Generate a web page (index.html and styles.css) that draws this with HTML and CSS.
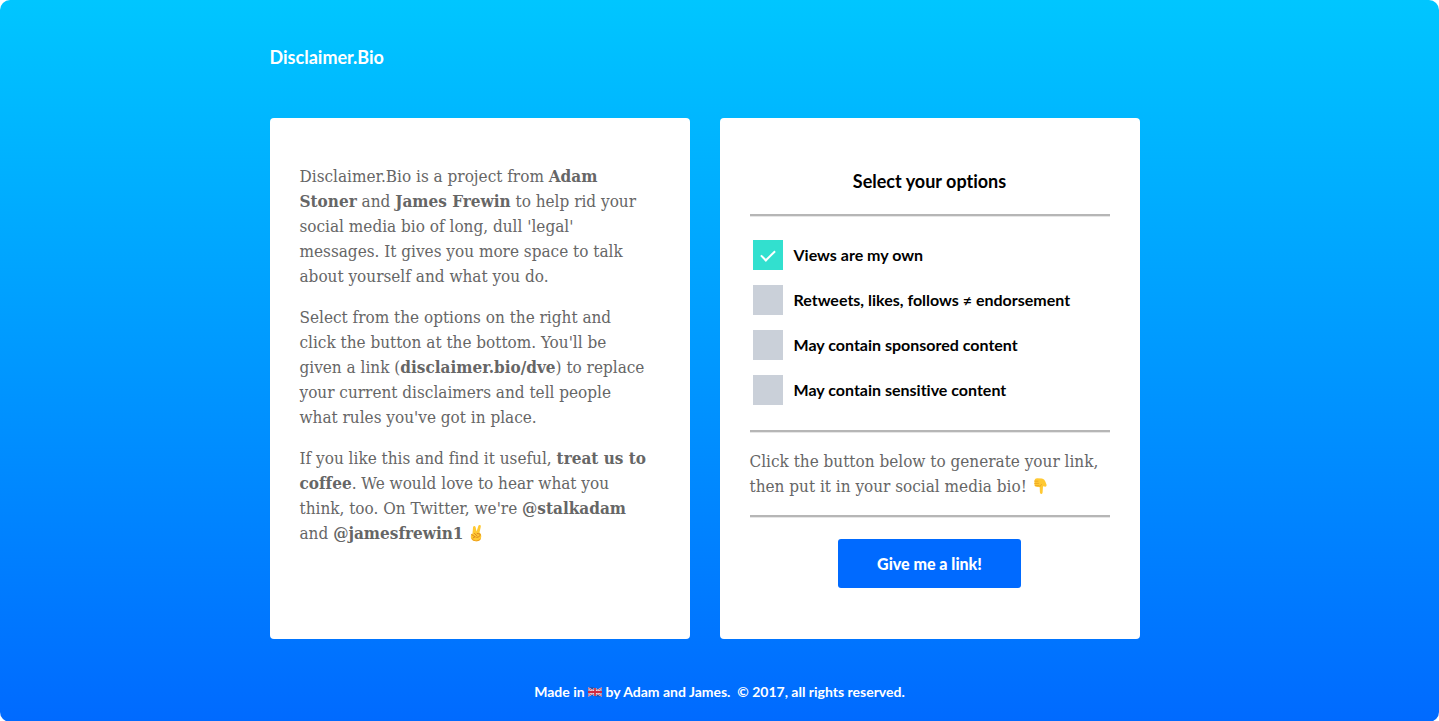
FILE: index.html
```html
<!DOCTYPE html>
<html lang="en">
<head>
<meta charset="utf-8">
<meta name="viewport" content="width=device-width, initial-scale=1">
<title>Disclaimer.Bio</title>
<link rel="stylesheet" href="styles.css">
</head>
<body>
<div class="page">
  <header class="header wrap">
    <h1 class="brand">Disclaimer.Bio</h1>
  </header>
  <main class="cards wrap">
    <section class="card about">
      <p>Disclaimer.Bio is a project from <a href="#adam">Adam<br>Stoner</a> and <a href="#james">James Frewin</a> to help rid your<br>social media bio of long, dull 'legal'<br>messages. It gives you more space to talk<br>about yourself and what you do.</p>
      <p>Select from the options on the right and<br>click the button at the bottom. You'll be<br>given a link (<strong>disclaimer.bio/dve</strong>) to replace<br>your current disclaimers and tell people<br>what rules you've got in place.</p>
      <p>If you like this and find it useful, <a href="#coffee">treat us to<br>coffee</a>. We would love to hear what you<br>think, too. On Twitter, we're <a href="#stalkadam">@stalkadam</a><br>and <a href="#jamesfrewin1">@jamesfrewin1</a>
        <svg class="emoji" viewBox="0 0 16 18" role="img" aria-label="Victory hand"><path d="M4.500 9.500 5 3.500Q5 2 6.200 2 7.300 2 7.600 3.300L8.600 7.500 10.400 1.800Q10.900.7 12 1 13.100 1.400 12.800 2.700L11.500 8.500Q13.500 9.500 13.300 12.500 13 17.200 8.500 17.300 3.500 17.300 2.800 13.200 2.300 10.500 4.500 9.500Z" fill="#ffc933"/><path d="M3.600 10.500 7 12.800M6.500 9.500 9 11.800M7 12.800 5 14M9.200 9.500 12 10Q12.700 13 8.700 13.400" fill="none" stroke="#dc8820" stroke-linecap="round"/><path d="M3 13.800Q4.400 17.300 8.500 17.300 12 17.200 13 14.300 10 17 7 16.200 4.500 15.700 3 13.800Z" fill="#ed9d1c"/></svg></p>
    </section>
    <form class="card options" action="#">
      <h2 class="title">Select your options</h2>
      <hr class="rule">
      <div class="choices">
        <label class="choice"><input class="box" type="checkbox" checked>Views are my own</label>
        <label class="choice"><input class="box" type="checkbox">Retweets, likes, follows ≠ endorsement</label>
        <label class="choice"><input class="box" type="checkbox">May contain sponsored content</label>
        <label class="choice"><input class="box" type="checkbox">May contain sensitive content</label>
      </div>
      <hr class="rule">
      <p class="hint">Click the button below to generate your link,<br>then put it in your social media bio!
        <svg class="emoji" viewBox="0 0 16 18" role="img" aria-label="Pointing down"><path d="M2.500 3.200Q3 1.300 5 1.300L10 1.600Q12.500 2 13.200 4.300L14.500 7.500Q15 9.200 13.500 9.800L11 9.200 10.600 15.500Q10.300 17 9.200 17 8 16.900 7.900 15.300L7.700 9.800Q3 10.600 2.500 8.200Z" fill="#ffc933"/><path d="M2.800 4.200H6M2.700 6.400H6.500M3.200 8.600H7M7.700 9.800 9.500 7.400" fill="none" stroke="#efaa25" stroke-linecap="round"/></svg></p>
      <hr class="rule">
      <button class="submit" type="submit">Give me a link!</button>
    </form>
  </main>
  <footer class="footer">Made in
    <svg class="flag" viewBox="0 0 14 10" role="img" aria-label="UK"><path d="M0 1Q3.500-.5 7 1T14 1V9Q10.500 10 7 9T0 9Z" fill="#294b9b"/><path d="M0 1 14 9M14 1 0 9" stroke="#e8e3ee" stroke-width="2"/><path d="M0 1 14 9M14 1 0 9" stroke="#d02c42" stroke-width=".8"/><path d="M7 1V9M0 5H14" stroke="#f2e9ef" stroke-width="3"/><path d="M7 1V9M0 5H14" stroke="#d02c42" stroke-width="1.800"/></svg>
    by Adam and James. &nbsp;© 2017, all rights reserved.</footer>
</div>
</body>
</html>
```
FILE: styles.css
```css
* { box-sizing: border-box; }

body {
  margin: 0;
  background: #fff;
  color: #000;
  font-family: Lato, sans-serif;
  font-variant-ligatures: none;
}

.page {
  min-height: 100vh;
  border-radius: 10px;
  background: linear-gradient(#00c6ff, #006aff);
}

.wrap {
  max-width: 900px;
  margin: 0 auto;
  padding-right: 30px;
}

.header { padding-top: 45px; padding-bottom: 49px; }

.brand {
  margin: 0;
  color: #fff;
  font-size: 18px;
  line-height: 24px;
}

.cards {
  display: grid;
  grid-template-columns: repeat(auto-fit, minmax(360px, 1fr));
  gap: 30px;
}

.card {
  padding: 46px 30px 51px;
  border-radius: 4px;
  background: #fff;
}

.about p,
.hint {
  margin: 0 0 16px;
  color: #666;
  font-family: "DejaVu Serif Condensed", "DejaVu Serif", serif;
  font-size: 17px;
  line-height: 25px;
}

.about a {
  color: inherit;
  font-weight: bold;
  text-decoration: none;
}

.emoji {
  width: 16px;
  height: 18px;
  vertical-align: -3px;
}

.title {
  margin: 5px 0 21px;
  font-size: 18px;
  line-height: 24px;
  text-align: center;
}

.rule {
  height: 3px;
  margin: 0;
  border: 0;
  border-top: 2px solid #b6b6b6;
  border-bottom: 1px solid #e6e6e6;
}

.choices {
  display: grid;
  gap: 15px;
  padding: 23px 3px 25px;
}

.choice {
  display: flex;
  align-items: center;
  gap: 11px;
  font-size: 16px;
  font-weight: 700;
  line-height: 30px;
}

.box {
  appearance: none;
  flex: none;
  display: grid;
  place-items: center;
  width: 30px;
  height: 30px;
  margin: 0;
  background: #cad0d9;
}

.box:checked { background: #32e0cf; }

.box:checked::before {
  content: "";
  width: 6px;
  height: 12px;
  margin-bottom: 3px;
  border: solid #fff;
  border-width: 0 2px 2px 0;
  transform: rotate(45deg);
}

.hint { margin: 16px 0; }

.submit {
  display: block;
  margin: 21px auto 0;
  padding: 13px 39px 12px;
  border: 0;
  border-radius: 3px;
  background: #006aff;
  color: #fff;
  font-family: inherit;
  font-size: 16px;
  font-weight: 900;
  line-height: 24px;
}

.footer {
  padding: 43px 0 20px;
  color: #fff;
  font-size: 14px;
  font-weight: 700;
  line-height: 20px;
  text-align: center;
}

.flag { width: 14px; height: 10px; }
```
